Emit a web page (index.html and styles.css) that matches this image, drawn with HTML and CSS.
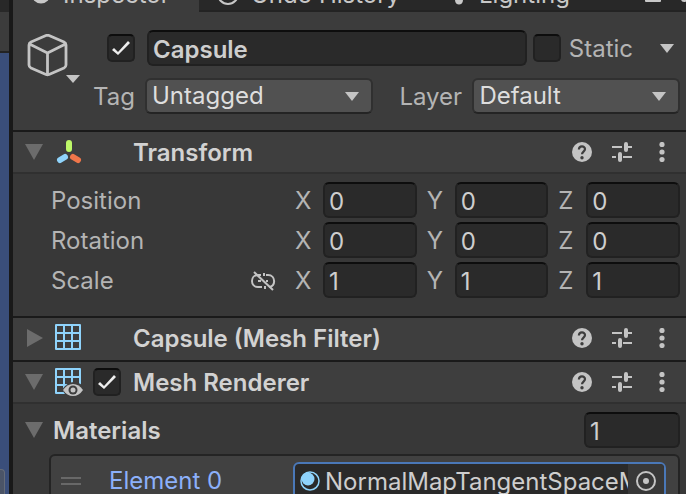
FILE: index.html
```html
<!DOCTYPE html>
<html lang="en">
<head>
  <meta charset="UTF-8">
  <meta name="viewport" content="width=device-width, initial-scale=1.0">
  <title>Inspector</title>
  <link rel="stylesheet" href="styles.css">
</head>
<body>
  <!-- shared icons -->
  <svg class="sprite" aria-hidden="true">
    <symbol id="down" viewBox="0 0 14 9"><path d="M0 0h14L7 9z"/></symbol>
    <symbol id="fold-open" viewBox="0 0 18 18"><path d="M0 1h18L9 17z"/></symbol>
    <symbol id="fold-closed" viewBox="0 0 18 18"><path d="M2 0v18l16-9z"/></symbol>
    <symbol id="help" viewBox="0 0 20 20">
      <circle cx="10" cy="10" r="10"/>
      <path d="M6.900 7.500C6.900 3.400 13 3.400 13 7.100c0 2.600-3 2.500-3 5.200" fill="none" stroke="#3e3e3e" stroke-width="2.200"/>
      <circle cx="10" cy="15.700" r="1.700" fill="#3e3e3e"/>
    </symbol>
    <symbol id="sliders" viewBox="0 0 20 20">
      <path d="M0 5h10M16 5h4M0 15h4M11 15h9" fill="none" stroke="currentColor" stroke-width="2"/>
      <path d="M14 2v6M8 12v6" fill="none" stroke="currentColor" stroke-width="4" stroke-linecap="round"/>
    </symbol>
    <symbol id="dots" viewBox="0 0 20 20">
      <circle cx="10" cy="2.500" r="2.600"/><circle cx="10" cy="10" r="2.600"/><circle cx="10" cy="17.500" r="2.600"/>
    </symbol>
    <symbol id="grid" viewBox="0 0 28 28">
      <path d="M2 1h24v24H2zM10 1v24M18 1v24M2 9h24M2 17h24" fill="none" stroke="#8fd3fb" stroke-width="2" stroke-linejoin="round"/>
    </symbol>
  </svg>

  <div class="editor">
    <div class="scene">
      <div class="scene-tab"></div>
      <div class="scene-toolbar"></div>
      <div class="scene-view"><div class="scene-overlay"></div></div>
    </div>

    <main class="inspector">
      <nav class="tabs">
        <a href="#inspector" class="tab active">
          <svg width="20" height="20"><circle cx="10" cy="10" r="9.500"/></svg>
          Inspector
        </a>
        <a href="#history" class="tab history">
          <svg width="22" height="22"><circle cx="11" cy="11" r="10" class="outline" stroke="currentColor" stroke-width="2"/></svg>
          Undo History
        </a>
        <a href="#lighting" class="tab lighting">
          <svg width="16" height="22"><path d="M3 4h10v9H3zM4 17h8c0 6-8 6-8 0z"/></svg>
          Lighting
        </a>
        <div class="tab-tools">
          <svg width="16" height="20"><rect y="8" width="16" height="11" rx="1"/></svg>
          <svg width="5" height="20"><circle cx="3" cy="16" r="3"/></svg>
        </div>
      </nav>

      <header class="object">
        <button class="cube" aria-label="Select icon">
          <svg width="54" height="50" viewBox="0 0 54 50">
            <path d="M20 1.500 Q21.500 1 23 1.500 L38 8 Q40 9 40 11 V31 Q40 33 38 34 L23 40.500 Q21.500 41 20 40.500 L5 34 Q3 33 3 31 V11 Q3 9 5 8Z M3.500 10 L21.500 19 L39.500 10 M21.500 19V40" transform="translate(-1)" fill="none" stroke="#c4c4c4" stroke-width="2.800" stroke-linejoin="round"/>
            <path d="M39 41h14l-7 8z" fill="#c4c4c4"/>
          </svg>
        </button>
        <div class="object-fields">
          <div class="name-row">
            <input type="checkbox" class="check" aria-label="Active" checked>
            <input type="text" class="field name" aria-label="Name" value="Capsule">
            <input type="checkbox" class="check" id="static">
            <label for="static">Static</label>
            <button class="arrow" aria-label="Static flags"><svg width="14" height="9"><use href="#down"/></svg></button>
          </div>
          <div class="tag-row">
            <label for="tag">Tag</label>
            <div class="dropdown">
              <select id="tag"><option>Untagged</option></select>
              <svg width="14" height="9"><use href="#down"/></svg>
            </div>
            <label for="layer" class="layer-label">Layer</label>
            <div class="dropdown">
              <select id="layer"><option>Default</option></select>
              <svg width="14" height="9"><use href="#down"/></svg>
            </div>
          </div>
        </div>
      </header>

      <section>
        <div class="component open">
          <button class="fold" aria-label="Collapse"><svg width="18" height="18"><use href="#fold-open"/></svg></button>
          <svg class="type" width="28" height="28" stroke-width="6" stroke-linecap="round">
            <path d="M15 5v6" stroke="#bdf768"/>
            <path d="M11 19l-5 3" stroke="#8fd3fb"/>
            <path d="M19 19l5 3" stroke="#f0764a"/>
          </svg>
          <h2>Transform</h2>
          <button class="tool" aria-label="Help"><svg width="20" height="20"><use href="#help"/></svg></button>
          <button class="tool" aria-label="Presets"><svg width="20" height="20"><use href="#sliders"/></svg></button>
          <button class="tool" aria-label="More"><svg width="20" height="20"><use href="#dots"/></svg></button>
        </div>
        <div class="vectors">
          <div class="vector">
            <span class="prop">Position</span>
            <label for="px">X</label><input class="field" id="px" value="0">
            <label for="py">Y</label><input class="field" id="py" value="0">
            <label for="pz">Z</label><input class="field" id="pz" value="0">
          </div>
          <div class="vector">
            <span class="prop">Rotation</span>
            <label for="rx">X</label><input class="field" id="rx" value="0">
            <label for="ry">Y</label><input class="field" id="ry" value="0">
            <label for="rz">Z</label><input class="field" id="rz" value="0">
          </div>
          <div class="vector">
            <span class="prop">Scale
              <button class="link" aria-label="Constrain proportions">
                <svg width="26" height="22" viewBox="0 0 26 22" stroke="currentColor" stroke-width="2">
                  <path class="outline" d="M11 5H8C0 5 0 17 8 17h4M16 5h2c8 0 8 12 1 12M8 11h3M16 11h2M15 16v3M14 3v3"/>
                  <path d="M4 2l19 18"/>
                </svg>
              </button>
            </span>
            <label for="sx">X</label><input class="field" id="sx" value="1">
            <label for="sy">Y</label><input class="field" id="sy" value="1">
            <label for="sz">Z</label><input class="field" id="sz" value="1">
          </div>
        </div>
      </section>

      <section>
        <div class="component">
          <button class="fold" aria-label="Expand"><svg width="18" height="18"><use href="#fold-closed"/></svg></button>
          <svg class="type" width="28" height="28"><use href="#grid"/></svg>
          <h2>Capsule (Mesh Filter)</h2>
          <button class="tool" aria-label="Help"><svg width="20" height="20"><use href="#help"/></svg></button>
          <button class="tool" aria-label="Presets"><svg width="20" height="20"><use href="#sliders"/></svg></button>
          <button class="tool" aria-label="More"><svg width="20" height="20"><use href="#dots"/></svg></button>
        </div>
      </section>

      <section>
        <div class="component open">
          <button class="fold" aria-label="Collapse"><svg width="18" height="18"><use href="#fold-open"/></svg></button>
          <svg class="type" width="28" height="28">
            <use href="#grid"/>
            <path d="M8 22q5-8 12-8t12 8q-5 8-12 8t-12-8z" fill="#3e3e3e"/>
            <path d="M9 22q4-6 10-6 6 0 10 6-4 6-10 6-6 0-10-6z" fill="#c4c4c4"/>
            <circle cx="19" cy="22" r="4.500" fill="#3e3e3e"/>
            <circle cx="19" cy="22" r="2.500" fill="#c4c4c4"/>
          </svg>
          <input type="checkbox" class="check" aria-label="Enabled" checked>
          <h2>Mesh Renderer</h2>
          <button class="tool" aria-label="Help"><svg width="20" height="20"><use href="#help"/></svg></button>
          <button class="tool" aria-label="Presets"><svg width="20" height="20"><use href="#sliders"/></svg></button>
          <button class="tool" aria-label="More"><svg width="20" height="20"><use href="#dots"/></svg></button>
        </div>
        <div class="materials">
          <div class="materials-row">
            <button class="fold" aria-label="Collapse"><svg width="18" height="18"><use href="#fold-open"/></svg></button>
            <label for="count">Materials</label>
            <input class="field" id="count" value="1">
          </div>
          <div class="list">
            <div class="handle"></div>
            <label for="element0">Element 0</label>
            <div class="picker">
              <svg width="20" height="20"><circle cx="10" cy="10" r="9" fill="none" stroke="#8fd3fb" stroke-width="1.500"/><circle cx="8" cy="8" r="6.500" fill="#8fd3fb"/></svg>
              <input id="element0" value="NormalMapTangentSpaceMaterial" readonly>
              <button aria-label="Select material">
                <svg width="20" height="20"><circle cx="10" cy="10" r="9" fill="none" stroke="currentColor" stroke-width="2"/><circle cx="10" cy="10" r="3" fill="currentColor"/></svg>
              </button>
            </div>
          </div>
        </div>
      </section>
    </main>
  </div>
</body>
</html>
```
FILE: styles.css
```css
* {
  box-sizing: border-box;
}
body {
  margin: 0;
  overflow: hidden;
  background: #191919;
  color: #b4b4b4;
  font-family: Inter, "Liberation Sans", sans-serif;
  font-size: 24px;
  line-height: 28px;
}
svg {
  display: block;
  flex: none;
  fill: currentColor;
}
.sprite {
  display: none;
}
.outline {
  fill: none;
}
button {
  display: block;
  flex: none;
  padding: 0;
  border: none;
  background: none;
  color: #c4c4c4;
}
input, select {
  min-width: 0;
  margin: 0;
  font: inherit;
  color: #cecece;
}
label, h2, .prop {
  padding-top: 2px;
}
.editor {
  display: flex;
  height: 100vh;
}

/* scene window */
.scene {
  display: flex;
  flex-direction: column;
  flex: none;
  width: 9px;
  margin-right: 4px;
}
.scene-tab {
  height: 12px;
  background: #282828;
}
.scene-toolbar {
  height: 41px;
  background: #3c3c3c;
  border-bottom: 2px solid #232323;
}
.scene-view {
  display: flex;
  align-items: flex-end;
  flex: 1;
  background: #3a4e7a;
}
.scene-overlay {
  width: 5px;
  height: 25px;
  background: #4b5467;
  border: 1px solid #656b78;
  border-width: 1px 1px 0 0;
  border-radius: 0 4px 0 0;
}

/* tabs */
.inspector {
  flex: 1;
  min-width: 0;
  background: #383838;
}
.tabs {
  display: flex;
  height: 12px;
  overflow: hidden;
  align-items: flex-end;
  background: #282828;
}
.tab {
  display: flex;
  flex: none;
  align-items: center;
  gap: 12px;
  height: 40px;
  padding: 8px 18px 0;
  border-bottom: 2px solid #232323;
  color: #c8c8c8;
  text-decoration: none;
  white-space: nowrap;
}
.tab svg {
  margin-bottom: 2px;
}
.tab.active {
  width: 186px;
  background: #3c3c3c;
  border-bottom-color: #3c3c3c;
}
.history {
  width: 234px;
}
.lighting {
  width: 180px;
}
.tab-tools {
  display: flex;
  flex: 1;
  justify-content: flex-end;
  gap: 20px;
  height: 29px;
  border-bottom: 2px solid #232323;
  color: #c8c8c8;
}

/* object header */
.object {
  display: flex;
  padding: 18px 6px 16px 14px;
  background: #3c3c3c;
}
.cube {
  align-self: flex-start;
  margin-top: 4px;
}
.object-fields {
  flex: 1;
  min-width: 0;
  margin-left: 12px;
}
.name-row {
  display: flex;
  align-items: center;
  height: 36px;
  margin-bottom: 12px;
  padding: 0 6px 0 14px;
}
.name-row label {
  margin-left: 8px;
}
.name-row .name {
  flex: 1;
  margin: 0 6px 0 12px;
  font-weight: 600;
}
.arrow {
  margin-left: 27px;
}
.tag-row {
  display: grid;
  grid-template-columns: 52px 11fr 99px 10fr;
  align-items: center;
}
.layer-label {
  padding-left: 26px;
}
.dropdown {
  display: flex;
  align-items: center;
  height: 36px;
  padding-right: 12px;
  background: #515151;
  border: 2px solid #303030;
  border-bottom-color: #242424;
  border-radius: 6px;
  color: #c4c4c4;
}
.dropdown select {
  flex: 1;
  height: 32px;
  padding: 0 0 0 5px;
  appearance: none;
  background: none;
  border: none;
  color: #dedede;
}
.field {
  height: 36px;
  padding: 2px 4px 0;
  background: #2a2a2a;
  border: 2px solid #212121;
  border-top-color: #0d0d0d;
  border-radius: 6px;
}
.check {
  display: grid;
  flex: none;
  place-content: center;
  width: 28px;
  height: 28px;
  appearance: none;
  background: #2a2a2a;
  border: 2px solid #212121;
  border-top-color: #0d0d0d;
  border-radius: 5px;
}
.check:checked::before {
  content: "";
  width: 18px;
  height: 14px;
  background: #eee;
  clip-path: polygon(0 9px, 2px 7px, 6px 11px, 16px 0, 18px 2px, 6px 14px);
}

/* components */
section {
  border-top: 2px solid #1a1a1a;
}
.component {
  display: flex;
  align-items: center;
  height: 42px;
  padding: 0 14px 2px 12px;
  background: #3e3e3e;
}
.component.open {
  padding-bottom: 0;
  border-bottom: 2px solid #303030;
}
.fold {
  color: #6c6c6c;
}
.type {
  overflow: visible;
  margin: 0 11px;
}
.component h2 {
  flex: 1;
  margin: 0 0 0 40px;
  color: #d2d2d2;
  font-size: 24px;
  font-weight: 600;
}
.component .check + h2 {
  margin-left: 12px;
}
.tool + .tool {
  margin-left: 20px;
}
.vectors {
  display: grid;
  gap: 4px;
  padding: 8px 6px 18px 38px;
}
.vector {
  display: grid;
  grid-template-columns: 244px 28px 1fr 38px 1fr 38px 1fr;
  align-items: center;
}
.vector label + input ~ label {
  padding-left: 10px;
}
.prop {
  display: flex;
  justify-content: space-between;
  align-items: center;
}
.link {
  margin-right: 19px;
}

/* materials list */
.materials {
  padding: 8px 6px 0 12px;
}
.materials-row {
  display: flex;
  align-items: center;
  margin-bottom: 6px;
}
.materials-row label {
  flex: 1;
  margin-left: 10px;
  color: #d2d2d2;
  font-weight: 600;
}
.materials-row input {
  width: 96px;
}
.list {
  display: flex;
  align-items: center;
  margin-left: 24px;
  padding: 6px 12px 6px 10px;
  background: #414141;
  border: 2px solid #242424;
  border-radius: 6px;
}
.list label {
  width: 184px;
  margin-left: 28px;
  padding-top: 0;
  color: #8cb0fa;
}
.handle {
  width: 20px;
  height: 8px;
  border: solid #686868;
  border-width: 2px 0;
}
.picker {
  display: flex;
  align-items: center;
  flex: 1;
  min-width: 0;
  height: 38px;
  padding-left: 5px;
  background: #2a2a2a;
  border: 2px solid #4a78b8;
  border-radius: 6px;
  overflow: hidden;
}
.picker input {
  flex: 1;
  height: 34px;
  padding: 0;
  margin-left: 5px;
  background: none;
  border: none;
}
.picker button {
  padding: 7px 8px;
  background: #383838;
}
```
